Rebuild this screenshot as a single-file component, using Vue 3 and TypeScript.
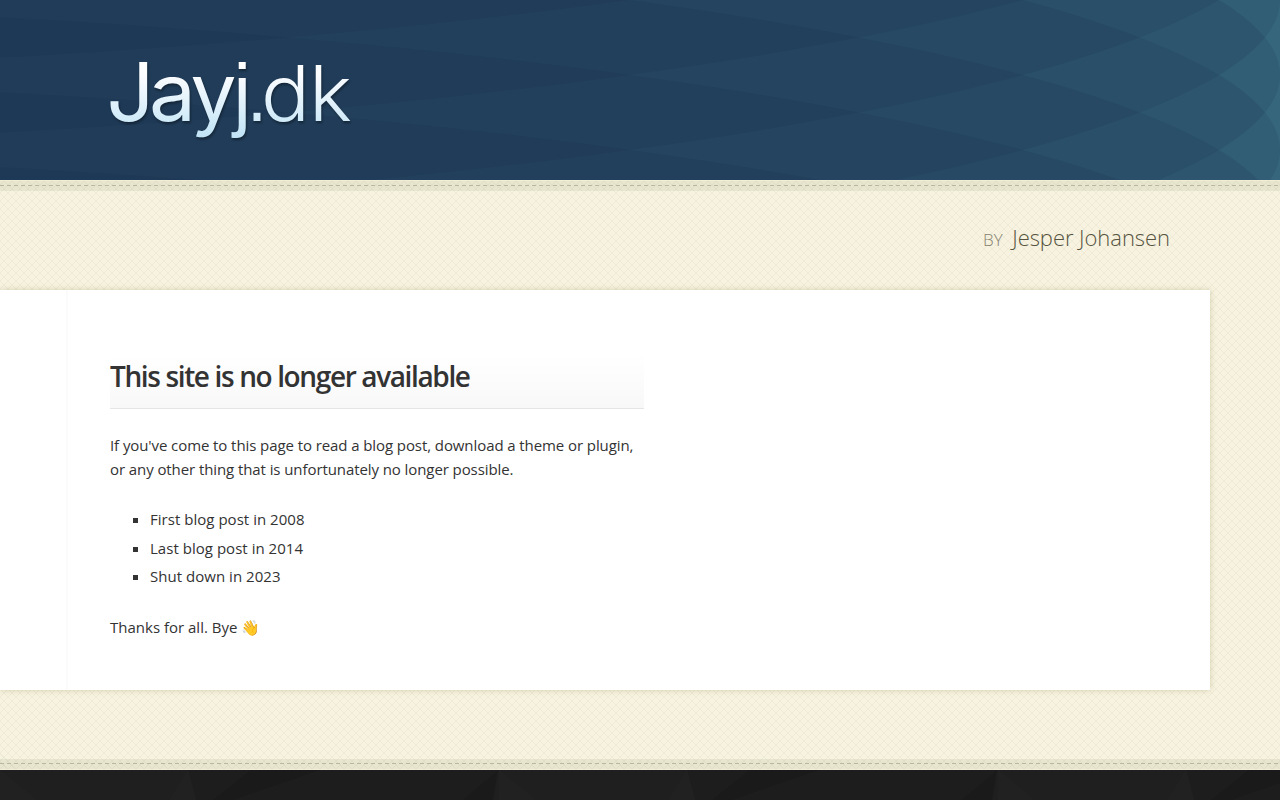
<template>
  <div class="page">
    <header class="header">
      <!-- Overlapping ellipses, each one darkens the base colour a bit more -->
      <svg class="header__waves" viewBox="0 0 1280 180" aria-hidden="true">
        <ellipse
          v-for="cy in waveCenters"
          :key="cy"
          cx="-640"
          :cy="cy"
          rx="1920"
          ry="300"
          fill="#142543"
          fill-opacity="0.13"
        />
      </svg>
      <svg class="header__logo" viewBox="0 0 280 180" role="img" aria-label="Jayj.dk">
        <defs>
          <linearGradient id="logo-fill" gradientUnits="userSpaceOnUse" x1="0" y1="62" x2="0" y2="136">
            <stop offset="0" stop-color="#ffffff" />
            <stop offset="0.2" stop-color="#fafcff" />
            <stop offset="1" stop-color="#c1e4f6" />
          </linearGradient>
        </defs>
        <g fill="url(#logo-fill)">
          <text
            v-for="(glyph, i) in logoGlyphs"
            :key="i"
            :x="glyph.x"
            y="121"
            :font-family="glyph.family"
            :font-size="glyph.size"
            :font-weight="glyph.weight"
            :textLength="glyph.width"
            lengthAdjust="spacingAndGlyphs"
          >{{ glyph.char }}</text>
        </g>
      </svg>
    </header>

    <div class="body">
      <div class="stitch stitch--top" />
      <p class="byline"><span class="byline__by">by</span> Jesper Johansen</p>

      <main class="content">
        <div class="content__rail" />
        <article class="post">
          <h1 class="post__title">This site is no longer available</h1>
          <p class="post__intro">
            If you've come to this page to read a blog post, download a theme or plugin,
            or any other thing that is unfortunately no longer possible.
          </p>
          <ul class="post__list">
            <li v-for="item in milestones" :key="item">{{ item }}</li>
          </ul>
          <p>Thanks for all. Bye 👋</p>
        </article>
      </main>

      <div class="stitch stitch--bottom" />
    </div>

    <footer class="footer">
      <svg class="footer__facets" viewBox="0 0 1280 30" aria-hidden="true">
        <defs>
          <pattern id="facets" width="499" height="30" patternUnits="userSpaceOnUse">
            <rect width="499" height="30" fill="#1f1f1f" />
            <polygon points="0,0 36,30 0,30" fill="#212121" />
            <polygon points="188,0 196,30 170,30" fill="#212121" />
            <polygon points="188,0 250,0 212,30 196,30" fill="#1d1d1d" />
            <polygon points="250,0 322,0 235,30 212,30" fill="#1a1a1a" />
            <polygon points="322,0 499,0 494,30 235,30" fill="#1d1d1d" />
            <polygon points="498,0 493,30 462,30" fill="#1a1a1a" />
          </pattern>
        </defs>
        <rect width="1280" height="30" fill="url(#facets)" />
      </svg>
    </footer>
  </div>
</template>

<script setup lang="ts">
interface LogoGlyph {
  char: string;
  x: number;
  width?: number;
  size: number;
  weight: number;
  family: string;
}

const waveCenters: number[] = Array.from({ length: 10 }, (_, i) => -225 + i * 75);

const logoGlyphs: LogoGlyph[] = [
  { char: 'J', x: 6.5, width: 48, size: 81, weight: 400, family: 'Inter, sans-serif' },
  { char: 'a', x: 49, width: 47, size: 80, weight: 400, family: 'Inter, sans-serif' },
  { char: 'y', x: 90.5, width: 46, size: 80, weight: 400, family: 'Inter, sans-serif' },
  { char: 'j', x: 133.5, width: 17.5, size: 82, weight: 400, family: "'Liberation Sans', sans-serif" },
  { char: '.', x: 147, width: 20, size: 76, weight: 400, family: "'Liberation Sans', sans-serif" },
  { char: 'd', x: 161, width: 49, size: 77, weight: 300, family: 'Inter, sans-serif' },
  { char: 'k', x: 209, width: 43, size: 77, weight: 300, family: 'Inter, sans-serif' },
];

const milestones: string[] = [
  'First blog post in 2008',
  'Last blog post in 2014',
  'Shut down in 2023',
];
</script>

<style>
body {
  margin: 0;
}
</style>

<style scoped>
.page {
  display: flex;
  flex-direction: column;
  height: 800px;
  overflow: hidden;
  font: 15px/24px 'Open Sans', sans-serif;
  color: #333;
}

.header {
  display: grid;
  height: 180px;
  background: #35667c;
}

.header__waves {
  grid-area: 1 / 1;
  width: 1280px;
  height: 180px;
}

.header__logo {
  grid-area: 1 / 1;
  width: 280px;
  height: 180px;
  margin-left: 100px;
  filter: drop-shadow(1px 2px 1px rgba(0, 0, 0, 0.35));
}

.body {
  display: flex;
  flex-direction: column;
  height: 590px;
  background:
    repeating-linear-gradient(45deg, rgba(140, 148, 105, 0.09) 0 1px, transparent 1px 5.657px),
    repeating-linear-gradient(-45deg, rgba(140, 148, 105, 0.09) 0 1px, transparent 1px 5.657px),
    #f8f3e0;
}

.stitch {
  flex: none;
  height: 11px;
  background:
    repeating-linear-gradient(90deg, #b9b7a0 0 4px, transparent 4px 7px) 0 5px / 100% 1px no-repeat,
    rgba(135, 145, 100, 0.13);
}

.stitch--top {
  box-shadow: inset 0 1px #f1edd6;
}

.stitch--bottom {
  margin-top: auto;
  background-position: 0 4px, 0 0;
  box-shadow: inset 0 -1px #f1edd6;
}

.byline {
  margin: 30px 110px 0 0;
  height: 69px;
  line-height: 32px;
  font-size: 22px;
  font-weight: 300;
  letter-spacing: -0.05px;
  text-align: right;
  color: #55533f;
}

.byline__by {
  margin-right: 4px;
  font-size: 17px;
  text-transform: uppercase;
  color: #858270;
}

.content {
  display: flex;
  width: 1210px;
  height: 400px;
  background: #fff;
  box-shadow: 0 0 6px rgba(120, 115, 60, 0.28);
}

.content__rail {
  box-sizing: border-box;
  width: 68px;
  border-right: 2px solid #fbfbfb;
}

.post {
  width: 534px;
  padding: 55px 0 0 42px;
}

.post p {
  margin: 0;
}

.post__title {
  box-sizing: border-box;
  height: 64px;
  margin: 0 0 24px;
  padding-top: 11px;
  border-bottom: 1px solid #e5e5e5;
  background: linear-gradient(#fff 15%, #f8f8f8);
  font-size: 28px;
  font-weight: 600;
  line-height: 40px;
  letter-spacing: -1.37px;
}

.post__intro {
  letter-spacing: -0.085px;
}

.post__list {
  margin: 26px 0 27px;
  padding-left: 40px;
  list-style: square;
  letter-spacing: 0.03px;
}

.post__list li {
  margin-bottom: 4.5px;
}

.footer {
  height: 30px;
  background: #1f1f1f;
}

.footer__facets {
  display: block;
  width: 1280px;
  height: 30px;
}
</style>
